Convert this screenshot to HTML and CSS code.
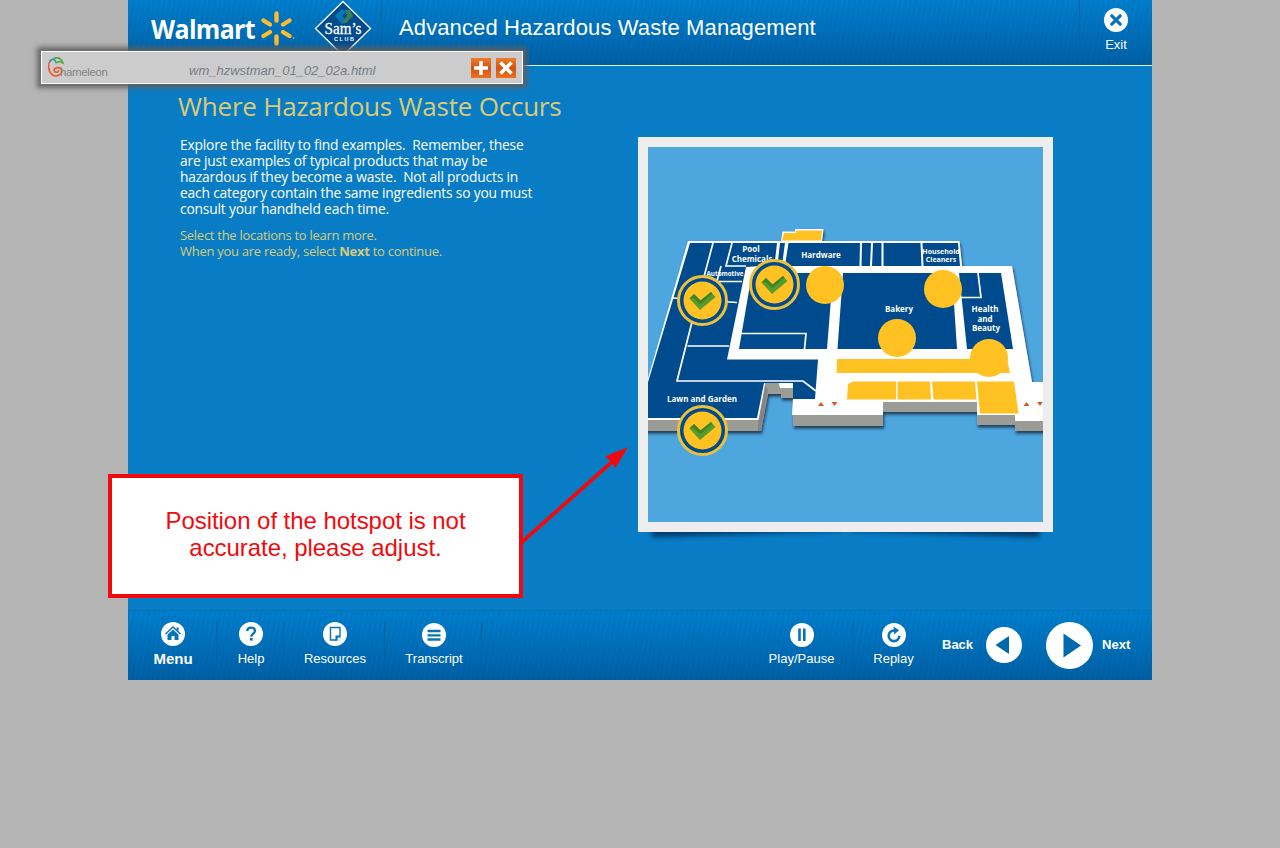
FILE: index.html
```
<!DOCTYPE html>
<html lang="en">
<head>
<meta charset="utf-8">
<title>Advanced Hazardous Waste Management</title>
<link rel="stylesheet" href="styles.css">
</head>
<body>
<div class="course">
  <header class="bar top">
    <div class="brand">
      <svg width="253" height="64" viewBox="128 0 253 64">
        <text class="walmart" x="151" y="38.500" textLength="104" lengthAdjust="spacingAndGlyphs">Walmart</text>
        <g stroke="#fdbb30" stroke-width="4.400" stroke-linecap="round">
          <path d="M276.500 13.500v7M276.500 36.500v7M263.500 20.500l6.500 4M289.500 20.500l-6.500 4M263.500 36l6.500-4M289.500 36l-6.500-4"/>
        </g>
        <circle cx="293.500" cy="38" r=".8" fill="#fdbb30"/>
        <path d="M343 1.500l27.500 27-27.500 27-27.500-27z" fill="#004b8d" stroke="#fff" stroke-width="1.300"/>
        <path d="M335 16l7-7 4 3-4 4 4 4-4 4z" fill="#0878b8"/>
        <path d="M345 10h5l3 6-7 7h-4l5-7z" fill="#397f55"/>
        <text class="sams" x="324.500" y="34" textLength="37" lengthAdjust="spacingAndGlyphs">Sam’s</text>
        <text class="club" x="334" y="40.500" textLength="20">CLUB</text>
      </svg>
    </div>
    <h1>Advanced Hazardous Waste Management</h1>
    <div class="tool exit">
      <svg width="24" height="24" viewBox="0 0 24 24"><circle cx="12" cy="12" r="12" fill="#fff"/><path d="M7.800 7.800l8.400 8.400M16.200 7.800l-8.400 8.400" stroke="#0873b8" stroke-width="3.200" stroke-linecap="round"/></svg>
      <span>Exit</span>
    </div>
  </header>

  <main>
    <section class="copy">
      <h2>Where Hazardous Waste Occurs</h2>
      <p class="explain">Explore the facility to find examples.&nbsp; Remember, these<br>are just examples of typical products that may be<br>hazardous if they become a waste.&nbsp; Not all products in<br>each category contain the same ingredients so you must<br>consult your handheld each time.</p>
      <p class="prompt">Select the locations to learn more.<br>When you are ready, select <b>Next</b> to continue.</p>
    </section>
    <figure class="frame">
      <svg width="395" height="375" viewBox="648 147 395 375">
        <defs>
          <filter id="soft" x="-10%" y="-10%" width="120%" height="120%"><feDropShadow dx="1" dy="2.500" stdDeviation="1.800" flood-color="#123" flood-opacity=".8"/></filter>
          <g id="done">
            <circle r="24" fill="#004b8d" stroke="#edbf3a" stroke-width="3"/>
            <circle r="19" fill="#ffc222"/>
            <path d="M-13-2l4.500-4.500 6.500 6.500 10.500-8.500 4.500 5-15.500 13z" fill="#569c2c"/>
            <path d="M-13-2l4.500-4.500 6.500 6.500 10.500-8.500 1.300 1.500-11.800 10.500-7-6z" fill="#3f8222"/>
          </g>
        </defs>
        <rect x="648" y="147" width="395" height="375" fill="#4ea6df"/>
        <g filter="url(#soft)">
          <path d="M688 241H781L782.500 232H795V229H823.500L822 241H959.500L962 266H1012L1032 382H1060V431H1015V425H977V412H883V426H793V398H781V394H768L761 431H630V446Z" fill="#9b9b98"/>
        </g>
        <path d="M764 383L768 390L761 431L758 431L758 420Z" fill="#858585"/>
        <path d="M688 241H781L782.500 231.500H795V229H823.500L822 241H959.500L962 266H1012L1032 382H1060V421H1015V415H977V402H883V415H792L793.500 388H780L778.500 382H765.500L758.500 420H630V440Z" fill="#fff"/>
        <g fill="#004b8d">
          <path d="M690 243H777L774.500 265L746 267L727 359.500H818L815 399H793V383H764L757 418H646V389Z"/>
          <path d="M780 243h5l-3 22h-4.500z"/>
          <path d="M788.500 243H860L859.500 266H785z"/>
          <path d="M862 243h9l-1 23h-8.500zM873 243h8.500v23H872zM883.500 243h37l1 23h-38zM922.500 243h35.500l2 23h-36.500z"/>
          <path d="M752 273h81l-6 76H739z"/>
          <path d="M843 273h109l5 76H837.500z"/>
          <path d="M959 273H1001L1013 349H967Z"/>
        </g>
        <g fill="none" stroke="#fff" stroke-width="1.700">
          <path d="M713 243L693 318L677 381H803L816 391M732 243L726 266H746M721 266L717 281M703 281.500H742M673 298L737 302.500M687.500 346H729"/>
          <path d="M741 333.500h65l-1.500 16M978 273L981 297.500H960"/>
        </g>
        <g fill="#ffc222">
          <path d="M784 233h12v-2.500h26l-1 10h-39z"/>
          <path d="M837 359H1007L1010 373H836.500zM848 384l5-2.500h43v18h-49zM897.500 381.500h32.500l1 18h-33.500zM932 381.500H975l1.500 18H933.500zM977 381.500h37l4.500 32H980z"/>
        </g>
        <path d="M818 406l3-4 3 4zM831.500 402h6l-3 4zM1023.500 406l3-4 3 4zM1037 402h6l-3 4z" fill="#d35c26"/>
        <g class="zones">
          <text x="751" y="252">Pool</text>
          <text x="752" y="262">Chemicals</text>
          <text x="725" y="276" class="tiny">Automotive</text>
          <text x="821" y="258">Hardware</text>
          <text x="941" y="254" class="small">Household</text>
          <text x="941" y="262" class="small">Cleaners</text>
          <text x="899" y="312">Bakery</text>
          <text x="985" y="312">Health</text>
          <text x="985" y="322">and</text>
          <text x="986" y="331">Beauty</text>
          <text x="702" y="402">Lawn and Garden</text>
        </g>
        <use href="#done" x="702.500" y="300.500"/>
        <use href="#done" x="774.500" y="284.500"/>
        <use href="#done" x="702.500" y="430.500"/>
        <g fill="#ffc222"><circle cx="825" cy="285" r="19"/><circle cx="943" cy="289" r="19"/><circle cx="897" cy="338" r="19"/><circle cx="989" cy="358" r="19"/></g>
      </svg>
    </figure>
  </main>

  <footer class="bar bottom">
    <div class="tool menu">
      <svg width="24" height="24" viewBox="0 0 24 24"><circle cx="12" cy="12" r="12" fill="#fff"/><path d="M4.500 12l7.500-7 7.500 7" fill="none" stroke="#0873b8" stroke-width="1.500"/><path d="M15.500 5.500h2v4l-2-2zM12 7.500l5.500 5V18h-4v-4h-3v4h-4v-5.500z" fill="#0873b8"/></svg>
      <b>Menu</b>
    </div>
    <div class="tool help">
      <svg width="24" height="24" viewBox="0 0 24 24"><circle cx="12" cy="12" r="12" fill="#fff"/><path d="M8.200 9c.1-2.300 1.700-3.400 3.900-3.400 2.300 0 3.900 1.100 3.900 3.100 0 2.800-3.700 2.900-3.700 6" fill="none" stroke="#0873b8" stroke-width="2.300"/><rect x="11" y="16" width="2.600" height="2.600" fill="#0873b8"/></svg>
      <span>Help</span>
    </div>
    <div class="tool resources">
      <svg width="24" height="24" viewBox="0 0 24 24"><circle cx="12" cy="12" r="12" fill="#fff"/><path d="M7.500 5.500h9.500v12.500H7.500z" fill="none" stroke="#0873b8" stroke-width="1.400"/><path d="M12.500 18.500v-5h5z" fill="#0873b8"/><path d="M14 18.800l3.800-3.800v3.800z" fill="#fff"/></svg>
      <span>Resources</span>
    </div>
    <div class="tool transcript">
      <svg width="24" height="24" viewBox="0 0 24 24"><circle cx="12" cy="12" r="12" fill="#fff"/><path d="M5.500 8h13M5.500 12.300h13M5.500 16.500h13" stroke="#0873b8" stroke-width="2.300"/></svg>
      <span>Transcript</span>
    </div>
    <div class="tool play">
      <svg width="24" height="24" viewBox="0 0 24 24"><circle cx="12" cy="12" r="12" fill="#fff"/><path d="M9.500 5.500v12.500M14.300 5.500v12.500" stroke="#0873b8" stroke-width="2.600"/></svg>
      <span>Play/Pause</span>
    </div>
    <div class="tool replay">
      <svg width="24" height="24" viewBox="0 0 24 24"><circle cx="12" cy="12" r="12" fill="#fff"/><path d="M13 7.600C9.500 7 6.700 9.400 6.700 12.800a5.300 5.300 0 0 0 10.600 0" fill="none" stroke="#0873b8" stroke-width="2.600"/><path d="M11.500 3.500l5.500 3.700-4.700 4.300z" fill="#0873b8"/></svg>
      <span>Replay</span>
    </div>
    <div class="pager">
      <b>Back</b>
      <svg class="prev" width="36" height="36" viewBox="0 0 36 36"><circle cx="18" cy="18" r="18" fill="#fff"/><path d="M9.500 18L23 9v18z" fill="#0068ad"/></svg>
      <svg class="next" width="47" height="47" viewBox="0 0 47 47"><circle cx="23.500" cy="23.500" r="23.500" fill="#fff"/><path d="M17.500 11.500v24l17.500-12z" fill="#0068ad"/></svg>
      <b>Next</b>
    </div>
  </footer>
</div>

<div class="inspector">
  <svg width="64" height="26" viewBox="46 55 64 26">
    <g fill="none" stroke-width="1.600" stroke-linecap="round">
      <path d="M50.500 60C47.500 64 48 71 52 74.500C56 77.500 62 75 62 70.500C61.500 67 55 66.500 54 70C54 73 58.500 73 58.500 70.500" stroke="#ee5a2c"/>
      <path d="M50 61.500C52 58.500 55 59 56 62.500" stroke="#1e9fc0"/>
      <path d="M53.500 58.500C58 57 61.500 59 63 63C60.500 61.500 58 61.500 56.500 62.500" stroke="#55a83d"/>
    </g>
    <text class="chameleon" x="60" y="76" textLength="48">hameleon</text>
  </svg>
  <span class="file">wm_hzwstman_01_02_02a.html</span>
  <svg class="buttons" width="45" height="20" viewBox="0 0 45 20">
    <defs><linearGradient id="orange" x2="0" y2="1"><stop stop-color="#f27b2f"/><stop offset=".5" stop-color="#cf5412"/><stop offset="1" stop-color="#f0701c"/></linearGradient></defs>
    <path d="M0 0h20v20H0zM25 0h20v20H25z" fill="url(#orange)"/>
    <path d="M10 3v14M3 10h14M29.500 4.500l11 11M40.500 4.500l-11 11" stroke="#fff" stroke-width="3.600"/>
  </svg>
</div>

<div class="note">Position of the hotspot is not<br>accurate, please adjust.</div>
<svg class="arrow" width="120" height="110" viewBox="515 440 120 110">
  <path d="M522 542L613 461" stroke="#f00a0e" stroke-width="3.800"/>
  <path d="M628 447l-23 9.500 5 4 5.500 7.500z" fill="#f00a0e"/>
</svg>
</body>
</html>
```
FILE: styles.css
```
body {
  margin: 0;
  height: 848px;
  overflow: hidden;
  background: #b5b5b5;
  font-family: "Liberation Sans", Arial, sans-serif;
}
.course {
  position: relative;
  z-index: 0;
  display: flex;
  flex-direction: column;
  width: 1024px;
  height: 680px;
  margin: 0 auto;
  background: #087dc5;
  color: #fff;
}
.bar {
  display: flex;
  box-sizing: border-box;
  background:
    repeating-linear-gradient(100deg, rgba(0, 50, 110, .07) 0 2px, transparent 2px 5px),
    linear-gradient(#007fcd, #005fa5);
}
.top {
  height: 66px;
  border-bottom: 1.5px solid #e4f1fa;
}
.brand {
  width: 253px;
  height: 64px;
  border-right: 1px solid #0063a6;
}
.brand svg { display: block; }
.walmart {
  font: bold 27.5px "Open Sans", sans-serif;
  letter-spacing: -.7px;
  fill: #fff;
}
.sams {
  font: 16.5px "Liberation Serif", serif;
  fill: #fff;
  stroke: #fff;
  stroke-width: .3px;
}
.club {
  font: bold 5.5px "Liberation Sans", sans-serif;
  fill: #fff;
}
h1 {
  flex: 1;
  margin: 0;
  padding: 15px 0 0 17px;
  font-size: 22px;
  line-height: 25px;
  font-weight: normal;
  letter-spacing: .12px;
  white-space: nowrap;
}
.tool {
  display: flex;
  flex-direction: column;
  align-items: center;
  box-sizing: border-box;
  gap: 4px;
  font-size: 13px;
  line-height: 16px;
}
.exit {
  gap: 5px;
  width: 73px;
  padding-top: 8px;
  border-left: 1px solid #0063a6;
}
main {
  display: flex;
  flex: 1;
}
.copy {
  width: 458px;
  padding: 22px 0 0 52px;
  font-family: "Open Sans", sans-serif;
  white-space: nowrap;
}
h2 {
  margin: 0 0 0 -2px;
  font-size: 26px;
  line-height: 36px;
  font-weight: normal;
  letter-spacing: -.22px;
  color: #dcca76;
}
.explain, .prompt {
  margin: 13px 0 0;
  font-size: 13.8px;
  line-height: 16px;
  letter-spacing: -.18px;
}
.prompt {
  margin-top: 10px;
  font-size: 13px;
  letter-spacing: -.28px;
  color: #d5cb7c;
}
.frame {
  position: relative;
  width: 395px;
  height: 375px;
  margin: 71px 0 0;
  border: 10px solid #ededed;
}
.frame svg { display: block; }
.frame::before, .frame::after {
  content: "";
  position: absolute;
  z-index: -1;
  bottom: 0;
  width: 190px;
  height: 20px;
  box-shadow: 0 12px 5px rgba(0, 30, 65, .7);
}
.frame::before { left: 3px; transform: rotate(-2deg); }
.frame::after { right: 3px; transform: rotate(2deg); }
.bottom {
  height: 70px;
  padding-top: 10px;
  border-top: 1px solid #0873b5;
}
.bottom .tool {
  height: 49px;
  padding-top: 2px;
  border-right: 1px solid #0061a5;
}
.bottom .menu, .bottom .help, .bottom .resources {
  gap: 5px;
  padding-top: 1px;
  padding-left: 2px;
}
.bottom .transcript { padding-left: 2px; }
.menu { width: 89px; font-size: 15px; }
.help { width: 67px; }
.resources { width: 101px; }
.transcript { width: 97px; }
.play { width: 104px; margin-left: 268px; }
.bottom .replay { width: 79px; border: 0; }
.pager {
  display: flex;
  align-items: center;
  height: 47px;
  padding-left: 9px;
  font-size: 13px;
}
.pager b { padding-bottom: 1px; }
.prev { margin: 0 24px 0 13px; }
.next { margin: 1px 9px 0 0; }
.inspector {
  position: absolute;
  left: 41px;
  top: 51px;
  display: flex;
  align-items: center;
  box-sizing: border-box;
  width: 482px;
  height: 33px;
  padding: 0 6px 0 4px;
  border: 1.5px solid #fff;
  background: #ccc;
  box-shadow: 0 0 5px 4px rgba(95, 95, 95, .9);
}
.file {
  flex: 1;
  padding-left: 79px;
  padding-top: 5px;
  font-size: 13px;
  font-style: italic;
  color: #777c84;
}
.chameleon {
  font: 11.5px "Liberation Sans", sans-serif;
  fill: #858585;
}
.note {
  position: absolute;
  left: 108px;
  top: 474px;
  box-sizing: border-box;
  width: 415px;
  height: 124px;
  padding-top: 29px;
  border: 4px solid #f00a0e;
  background: #fff;
  color: #f00a0e;
  font-size: 24px;
  line-height: 27px;
  letter-spacing: -.05px;
  text-align: center;
}
.arrow {
  position: absolute;
  left: 515px;
  top: 440px;
}
.zones {
  font: bold 8px "Open Sans", sans-serif;
  fill: #fff;
  text-anchor: middle;
}
.small { font-size: 7px; }
.tiny { font-size: 6.3px; }
```
